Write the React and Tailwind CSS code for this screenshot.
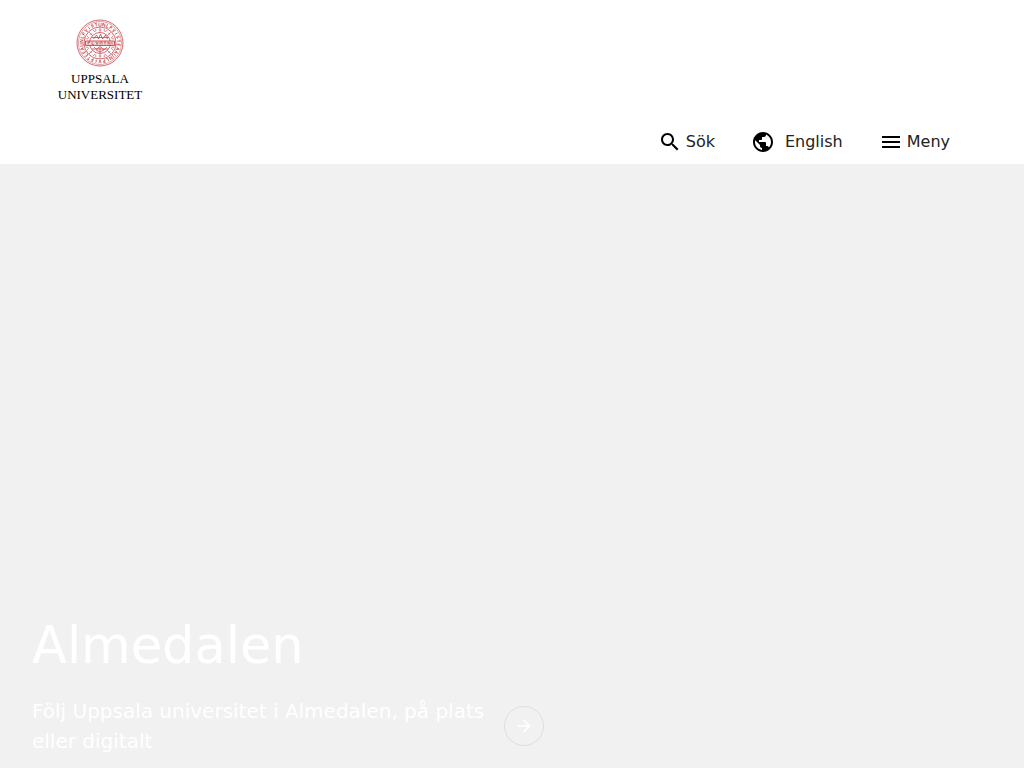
import React from 'react';

const letterStrokes = [
  'M22.9 3.8v3.1q1.1.6 2.2 0V3.8',
  'M23 7V3.8h1.2q1 .8 0 1.7H23',
  'M25 4q-2-.5-2 .6t1.6.8t-1.6 1.5',
  'M22.8 7L24 3.7L25.2 7M23.4 5.8h1.2',
  'M23.4 3.7V7h1.7',
  'M24 3.7V7',
  'M25 3.8h-1.8V7H25M23.2 5.4h1.5',
  'M22.9 7V3.8L25.1 7V3.8',
  'M22.9 3.7L24 7l1.1-3.3',
  'M22.8 3.8h2.4M24 3.8V7',
];
const letterAngles = Array.from({ length: 30 }, (_, i) => i * 12);
const rayAngles = Array.from({ length: 16 }, (_, i) => i * 22.5);

function Seal() {
  return (
    <svg viewBox="0 0 48 48" className="h-12 w-12" fill="none" stroke="#c4444a" aria-hidden="true">
      <circle cx="24" cy="24" r="23" strokeWidth="0.8" />
      <circle cx="24" cy="24" r="21.5" strokeWidth="0.5" />
      <circle cx="24" cy="24" r="16" strokeWidth="0.8" />
      <g strokeWidth="0.7">
        {letterAngles.map((angle, i) => (
          <path
            key={angle}
            transform={`rotate(${angle} 24 24)`}
            d={letterStrokes[(i * 7 + Math.floor(i / 10) * 3) % letterStrokes.length]}
          />
        ))}
      </g>
      <g strokeWidth="0.6">
        {rayAngles.map((angle, i) => (
          <path
            key={angle}
            transform={`rotate(${angle} 24 24)`}
            d={i % 2 === 0 ? 'M24 8.5v5M22.5 11h3' : 'M22.5 9.5q1.5 4 3 0'}
          />
        ))}
      </g>
      <circle cx="24" cy="24" r="10.5" strokeWidth="0.8" />
      <path
        d="M15.5 18.5h17M16 30h16M17.5 20l3-4l2 4l2-5l2 5l3-4l2 4M18 28q3 4 5 0M25 28q3 5 6 0M24 27v7M20 31l4 2l4-2"
        strokeWidth="0.8"
      />
      <path d="M9.5 22h29v4.5h-29z" fill="#f3d6d7" strokeWidth="0.9" />
      <path
        d="M12 25.5V23h2l-2 1.3M16 23v2.5h2M20 23l1 2.5l1-2.5M24 25.5V23h2v2.5M28 23h2M29 23v2.5M32 25.5V23l2 2.5V23M36 23v2.5"
        strokeWidth="0.7"
      />
    </svg>
  );
}

function Header() {
  return (
    <header className="flex flex-col bg-white">
      <a
        href="#start"
        className="ml-12 mt-[19px] flex w-26 flex-col items-center font-['Liberation_Serif',serif] text-[13px] leading-4 text-black"
      >
        <Seal />
        <span className="mt-1">UPPSALA</span>
        <span>UNIVERSITET</span>
      </a>
      <nav
        aria-label="Huvudmeny"
        className="mt-[17px] flex h-11 items-center justify-end gap-9 pr-[74px] text-base text-[#222222]"
      >
        <button type="button" className="flex items-center gap-1">
          <svg viewBox="0 0 24 24" className="h-6 w-6" fill="#000" aria-hidden="true">
            <path d="M15.5 14h-.79l-.28-.27C15.41 12.59 16 11.11 16 9.5 16 5.91 13.09 3 9.5 3S3 5.91 3 9.5 5.91 16 9.5 16c1.61 0 3.09-.59 4.23-1.57l.27.28v.79l5 4.99L20.49 19l-4.99-5zm-6 0C7.01 14 5 11.99 5 9.5S7.01 5 9.5 5 14 7.01 14 9.5 11.99 14 9.5 14z" />
          </svg>
          <span>Sök</span>
        </button>
        <a href="#english" className="flex items-center gap-2.5">
          <svg viewBox="0 0 24 24" className="h-6 w-6" fill="#000" aria-hidden="true">
            <path d="M12 2C6.48 2 2 6.48 2 12s4.48 10 10 10 10-4.48 10-10S17.52 2 12 2zm-1 17.93c-3.95-.49-7-3.85-7-7.93 0-.62.08-1.21.21-1.79L9 15v1c0 1.1.9 2 2 2v1.93zm6.9-2.54c-.26-.81-1-1.39-1.9-1.39h-1v-3c0-.55-.45-1-1-1H8v-2h2c.55 0 1-.45 1-1V7h2c1.1 0 2-.9 2-2v-.41c2.93 1.19 5 4.06 5 7.41 0 2.08-.8 3.97-2.1 5.39z" />
          </svg>
          <span>English</span>
        </a>
        <button type="button" className="flex items-center gap-1">
          <svg viewBox="0 0 24 24" className="h-6 w-6" fill="#000" aria-hidden="true">
            <path d="M3 18h18v-2H3v2zm0-5h18v-2H3v2zm0-7v2h18V6H3z" />
          </svg>
          <span>Meny</span>
        </button>
      </nav>
    </header>
  );
}

export default function App() {
  return (
    <div className="flex min-h-screen flex-col bg-white font-['DejaVu_Sans',sans-serif]">
      <Header />
      <main className="flex flex-1 flex-col justify-end bg-[#f1f1f1] px-8 pb-3 text-white">
        <h1 className="text-[51px] leading-[60px]">Almedalen</h1>
        <a href="#almedalen" className="mt-5 flex items-center gap-4">
          <p className="max-w-[456px] text-xl leading-[30px]">
            Följ Uppsala universitet i Almedalen, på plats eller digitalt
          </p>
          <span className="flex h-10 w-10 shrink-0 items-center justify-center rounded-full border border-[#dedede]">
            <svg viewBox="0 0 24 24" className="h-5 w-5" fill="#fff" aria-hidden="true">
              <path d="M12 4l-1.41 1.41L16.17 11H4v2h12.17l-5.58 5.59L12 20l8-8z" />
            </svg>
          </span>
        </a>
      </main>
    </div>
  );
}
